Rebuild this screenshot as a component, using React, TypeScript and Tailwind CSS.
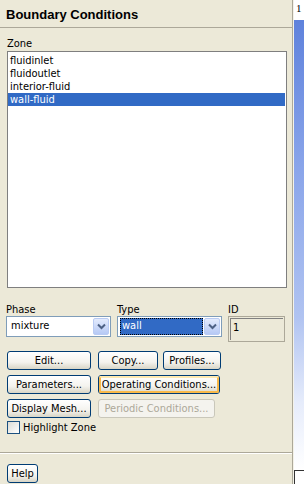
import React from "react";

const font = { fontFamily: '"DejaVu Sans Condensed", "Liberation Sans", Arial, sans-serif' };

function XPButton({ label, w, focus, disabled }: { label: string; w: number; focus?: boolean; disabled?: boolean }) {
  if (disabled) {
    return (
      <div
        className="h-[19px] rounded-[3px] border border-[#c9c7ba] bg-[#f4f3ee] text-[#aca899] flex items-center justify-center text-[11px] leading-none"
        style={{ width: w }}
      >
        {label}
      </div>
    );
  }
  return (
    <div
      className="h-[19px] rounded-[3px] border border-[#003c74] bg-[linear-gradient(to_bottom,#ffffff,#f4f3ee_60%,#d8d5c6)] flex items-center justify-center text-[11px] leading-none text-black"
      style={{ width: w }}
    >
      {focus ? (
        <div className="w-full h-full rounded-[2px] border-2 border-[#f8b94a] border-t-[#fde9b0] flex items-center justify-center">
          {label}
        </div>
      ) : (
        label
      )}
    </div>
  );
}

function Chevron() {
  return (
    <svg width="9" height="7" viewBox="0 0 9 7">
      <path d="M1 1.5 L4.5 5 L8 1.5" fill="none" stroke="#4d6185" strokeWidth="2" />
    </svg>
  );
}

function Dropdown({ value, w, selected }: { value: string; w: number; selected?: boolean }) {
  return (
    <div className="h-[21px] border border-[#7f9db9] bg-white flex p-[1px]" style={{ width: w }}>
      <div className="flex-1 flex items-center pl-[1px] pr-[1px]">
        {selected ? (
          <div className="w-full h-full bg-[#316ac5] text-white outline-1 outline-dotted outline-[#000] -outline-offset-1 flex items-center pl-[2px] text-[11px]">
            {value}
          </div>
        ) : (
          <span className="pl-[2px] text-[11px] text-black">{value}</span>
        )}
      </div>
      <div className="w-[16px] h-full rounded-[2px] border border-[#b9cbf3] bg-[linear-gradient(to_bottom,#e3ebfd,#b6c9f5)] flex items-center justify-center">
        <Chevron />
      </div>
    </div>
  );
}

export default function App() {
  const zones = ["fluidinlet", "fluidoutlet", "interior-fluid", "wall-fluid"];
  return (
    <div className="w-[304px] h-[484px] flex bg-[#ece9d8] overflow-hidden text-black" style={font}>
      <div className="w-[293px] shrink-0 min-w-0 overflow-hidden flex flex-col border-r border-[#aca899]">
        <div className="h-[28px] flex items-center pl-[6px] border-b border-[#aca899] shrink-0">
          <span className="text-[13px] font-bold leading-none pt-[1px]" style={{ fontFamily: '"Liberation Sans", Arial, sans-serif' }}>Boundary Conditions</span>
        </div>
        <div className="pl-[7px] pt-[10px] flex flex-col">
          <div className="text-[11px] leading-[12px] h-[13px]">Zone</div>
          <div className="w-[280px] h-[237px] border border-[#7f7f7f] bg-white pt-[2px] pr-[1px] flex flex-col">
            {zones.map((z, i) => (
              <div
                key={z}
                className={
                  "h-[13px] text-[11px] leading-[13px] pl-[2px] " +
                  (i === 3 ? "bg-[#316ac5] text-white" : "text-black")
                }
              >
                {z}
              </div>
            ))}
          </div>
        </div>
        <div className="pl-[6px] pt-[15px] flex gap-[6px]">
          <div className="flex flex-col">
            <div className="text-[11px] leading-[13px] h-[13px]">Phase</div>
            <Dropdown value="mixture" w={105} />
          </div>
          <div className="flex flex-col">
            <div className="text-[11px] leading-[13px] h-[13px]">Type</div>
            <Dropdown value="wall" w={105} selected />
          </div>
          <div className="flex flex-col">
            <div className="text-[11px] leading-[13px] h-[13px]">ID</div>
            <div className="w-[57px] h-[26px] border border-[#aca899] p-[1px]">
              <div className="w-full h-full border-l border-t border-[#808080] text-[11px] pl-[2px] pt-[1px]">1</div>
            </div>
          </div>
        </div>
        <div className="pl-[7px] pt-[9px] flex flex-col gap-[5px]">
          <div className="flex gap-[7px]">
            <XPButton label="Edit..." w={84} />
            <div className="flex gap-[5px]">
              <XPButton label="Copy..." w={60} />
              <XPButton label="Profiles..." w={58} />
            </div>
          </div>
          <div className="flex gap-[7px]">
            <XPButton label="Parameters..." w={84} />
            <XPButton label="Operating Conditions..." w={122} focus />
          </div>
          <div className="flex gap-[7px]">
            <XPButton label="Display Mesh..." w={84} />
            <XPButton label="Periodic Conditions..." w={117} disabled />
          </div>
        </div>
        <div className="pl-[7px] pt-[3px] flex items-center gap-[3px]">
          <div className="w-[13px] h-[13px] border border-[#1c5180] bg-[linear-gradient(to_bottom_right,#dcdcd5,#ffffff)]" />
          <span className="text-[11px] leading-[13px]">Highlight Zone</span>
        </div>
        <div className="mt-[18px] border-t border-[#aca899] border-b border-b-white" />
        <div className="pl-[7px] pt-[10px]">
          <XPButton label="Help" w={31} />
        </div>
      </div>
      <div className="w-[11px] shrink-0 flex flex-col bg-[#f4f2e8] pl-[1px]">
        <div className="h-[20px] shrink-0 bg-white text-[11px] pl-[2px] pt-[3px] leading-none" style={{ fontFamily: '"Liberation Serif", serif' }}>1</div>
        <div className="flex-1 bg-[linear-gradient(to_bottom,#5f82dc,#8aa5ea_33%,#b0c3f1_66%,#e6ecfb_85%,#ffffff)]" />
        <div className="h-[14px] shrink-0 bg-white border-l border-t border-[#333]" />
      </div>
    </div>
  );
}
